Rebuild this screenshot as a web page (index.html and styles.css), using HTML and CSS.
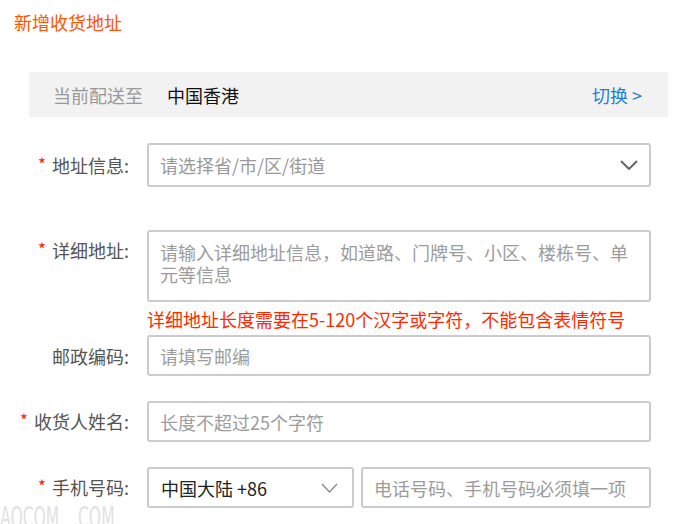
FILE: index.html
```html
<!DOCTYPE html>
<html>
	<head>
		<meta charset="utf-8">
		<title>新增收货地址</title>
		<link rel="stylesheet" href="styles.css">
	</head>
	<body>
		<div class="page-title">新增收货地址</div>

		<div class="deliver-bar">
			<span class="deliver-label">当前配送至</span>
			<span class="deliver-area">中国香港</span>
			<a class="deliver-switch">切换 &gt;</a>
		</div>

		<div class="addr-form">
			<div class="form-row row-addr">
				<label class="form-label"><i>*</i>地址信息:</label>
				<div class="fake-select field-full">
					<span class="ph">请选择省/市/区/街道</span>
					<svg class="arrow" width="18" height="10" viewBox="0 0 18 10"><path d="M1 1 L9 9 L17 1" fill="none" stroke="#666" stroke-width="2"/></svg>
				</div>
			</div>

			<div class="form-row row-detail">
				<label class="form-label"><i>*</i>详细地址:</label>
				<div class="field-full">
					<textarea class="input-text detail-text" placeholder="请输入详细地址信息，如道路、门牌号、小区、楼栋号、单元等信息"></textarea>
					<div class="error-tip">详细地址长度需要在5-120个汉字或字符，不能包含表情符号</div>
				</div>
			</div>

			<div class="form-row">
				<label class="form-label">邮政编码:</label>
				<input type="text" class="input-text field-full" placeholder="请填写邮编">
			</div>

			<div class="form-row">
				<label class="form-label"><i>*</i>收货人姓名:</label>
				<input type="text" class="input-text field-full" placeholder="长度不超过25个字符">
			</div>

			<div class="form-row">
				<label class="form-label"><i>*</i>手机号码:</label>
				<div class="fake-select area-code">
					<span>中国大陆 +86</span>
					<svg class="arrow" width="17" height="10" viewBox="0 0 17 10"><path d="M1 1 L8.5 9 L16 1" fill="none" stroke="#888" stroke-width="1.3"/></svg>
				</div>
				<input type="text" class="input-text phone-text" placeholder="电话号码、手机号码必须填一项">
			</div>
		</div>

		<div class="watermark">AOCOM .COM</div>
	</body>
</html>
```

FILE: styles.css
```css
html,
body {
	margin: 0;
	padding: 0;
	background: #ffffff;
	font-family: "Noto Sans CJK SC", "Microsoft YaHei", sans-serif;
	font-size: 18px;
}

body {
	position: relative;
	width: 677px;
	height: 524px;
	overflow: hidden;
}

.page-title {
	padding: 10px 0 0 14px;
	line-height: 24px;
	color: #ff5400;
}

.deliver-bar {
	display: flex;
	align-items: center;
	height: 45px;
	margin: 38px 9px 0 29px;
	padding: 0 26px 0 24px;
	background-color: #f2f2f2;
}

.deliver-label {
	color: #999999;
}

.deliver-area {
	margin-left: 24px;
	color: #111111;
}

.deliver-switch {
	margin-left: auto;
	color: #1f7fd6;
	cursor: pointer;
}

.addr-form {
	margin-top: 26px;
}

.form-row {
	display: flex;
	align-items: center;
	margin-bottom: 25px;
}

.row-addr {
	margin-bottom: 43px;
}

.row-detail {
	align-items: flex-start;
	margin-bottom: 4px;
}

.row-detail .form-label {
	padding-top: 8px;
}

.form-label {
	width: 129px;
	margin-right: 18px;
	text-align: right;
	color: #555555;
	line-height: 24px;
	flex-shrink: 0;
}

.form-label i {
	font-style: normal;
	color: #ff2200;
	margin-right: 6px;
	font-size: 17px;
	position: relative;
	top: -2px;
}

.field-full {
	width: 504px;
}

.fake-select {
	display: flex;
	align-items: center;
	box-sizing: border-box;
	border: 2px solid #c9cbd1;
	border-radius: 3px;
	background: #fff;
	padding: 0 11px;
	color: #222;
}

.row-addr .fake-select {
	height: 44px;
}

.fake-select .ph {
	color: #999999;
}

.fake-select .arrow {
	margin-left: auto;
}

.input-text {
	display: block;
	box-sizing: border-box;
	height: 41px;
	margin: 0;
	padding: 0 11px;
	border: 2px solid #c9cbd1;
	border-radius: 3px;
	font-family: inherit;
	font-size: 18px;
	color: #222;
	outline: none;
	background: #fff;
}

.input-text::placeholder {
	color: #9c9c9c;
}

.detail-text {
	width: 504px;
	height: 72px;
	padding: 9px 14px 0 11px;
	line-height: 22px;
	resize: none;
	overflow: hidden;
}

.error-tip {
	margin-top: 5px;
	line-height: 24px;
	color: #ff2a00;
	white-space: nowrap;
}

.area-code {
	width: 207px;
	height: 41px;
	padding-left: 12px;
	padding-right: 14px;
}

.phone-text {
	width: 290px;
	margin-left: 7px;
}

/* 站点水印 */
.watermark {
	position: absolute;
	left: 0;
	top: 504px;
	font-family: "DejaVu Sans Condensed", "DejaVu Sans", sans-serif;
	font-size: 28px;
	line-height: 28px;
	color: #e2e2e2;
	white-space: nowrap;
	word-spacing: 14px;
	transform: scaleX(0.62);
	transform-origin: left top;
}
```
